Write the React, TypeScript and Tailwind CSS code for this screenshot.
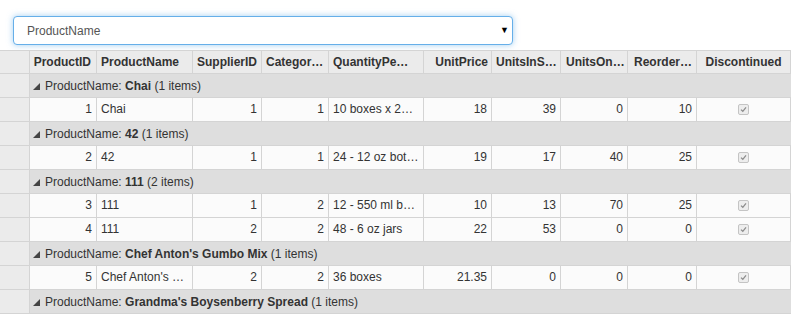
import React from "react";

type Col = { label: string; w: number; hAlign: string; num?: boolean; check?: boolean };

const cols: Col[] = [
  { label: "ProductID", w: 67, hAlign: "text-right pr-[5px]", num: true },
  { label: "ProductName", w: 96, hAlign: "text-left pl-[4px]" },
  { label: "SupplierID", w: 69, hAlign: "text-left pl-[4px]", num: true },
  { label: "CategoryID", w: 67, hAlign: "text-left pl-[4px]", num: true },
  { label: "QuantityPerUnit", w: 95, hAlign: "text-left pl-[4px] pr-[12px]" },
  { label: "UnitPrice", w: 68, hAlign: "text-right pr-[3px]", num: true },
  { label: "UnitsInStock", w: 69, hAlign: "text-left pl-[4px]", num: true },
  { label: "UnitsOnOrder", w: 67, hAlign: "text-left pl-[5px]", num: true },
  { label: "ReorderLevel", w: 69, hAlign: "text-left pl-[6px]", num: true },
  { label: "Discontinued", w: 94, hAlign: "text-center", check: true },
];

// each group: title + rows
const groups = [
  { name: "Chai", count: 1, rows: [["1", "Chai", "1", "1", "10 boxes x 20 bags", "18", "39", "0", "10"]] },
  { name: "42", count: 1, rows: [["2", "42", "1", "1", "24 - 12 oz bottles", "19", "17", "40", "25"]] },
  {
    name: "111",
    count: 2,
    rows: [
      ["3", "111", "1", "2", "12 - 550 ml bottles", "10", "13", "70", "25"],
      ["4", "111", "2", "2", "48 - 6 oz jars", "22", "53", "0", "0"],
    ],
  },
  { name: "Chef Anton's Gumbo Mix", count: 1, rows: [["5", "Chef Anton's Cajun Seasoning", "2", "2", "36 boxes", "21.35", "0", "0", "0"]] },
  { name: "Grandma's Boysenberry Spread", count: 1, rows: [] },
];

const CheckBox = () => (
  <span className="inline-flex w-[11px] h-[11px] items-center justify-center rounded-[2px] border border-[#c4c4c4] bg-[#ededed] align-middle">
    <svg width="7" height="7" viewBox="0 0 7 7">
      <path d="M1 3.6 L2.8 5.3 L6 1.4" fill="none" stroke="#8c8c8c" strokeWidth="1.3" />
    </svg>
  </span>
);

const RowHead = () => <div className="w-[30px] shrink-0 h-[24px] bg-[#ebebeb] border-r border-b border-[#d4d4d4]" />;

const App = () => {
  return (
    <div className="w-[791px] h-[314px] overflow-hidden bg-white text-[#333] text-[12px]" style={{ fontFamily: '"Liberation Sans", Arial, sans-serif' }}>
      {/* group by select */}
      <div className="pt-[16px] pl-[13px]">
        <div className="w-[500px] h-[29px] flex items-center justify-between rounded-[4px] border border-[#66afe9] bg-white pl-[13px] pr-[3px] shadow-[0_0_6px_rgba(102,175,233,0.6)]">
          <span className="text-[#555] text-[12px]">ProductName</span>
          <span className="text-[9px] text-black">▼</span>
        </div>
      </div>

      <div className="mt-[5px] w-[830px]">
        {/* header */}
        <div className="flex border-t border-[#d4d4d4] h-[24px]">
          <div className="w-[30px] shrink-0 h-[23px] bg-[#ebebeb] border-r border-b border-[#d4d4d4]" />
          {cols.map((c) => (
            <div
              key={c.label}
              style={{ width: c.w }}
              className={`shrink-0 h-[23px] leading-[22px] bg-[#ebebeb] border-r border-b border-[#d4d4d4] font-bold whitespace-nowrap overflow-hidden text-ellipsis ${c.hAlign}`}
            >
              {c.label}
            </div>
          ))}
        </div>

        {groups.map((g) => (
          <React.Fragment key={g.name}>
            <div className="flex">
              <RowHead />
              <div className="w-[800px] h-[24px] bg-[#dedede] border-b border-[#d4d4d4] flex items-center pl-[3px] gap-[5px]">
                <svg width="7" height="7" viewBox="0 0 7 7" className="mt-[1px]">
                  <path d="M7 0 L7 7 L0 7 Z" fill="#444" />
                </svg>
                <span>
                  ProductName: <b>{g.name}</b> ({g.count} items)
                </span>
              </div>
            </div>
            {g.rows.map((r, ri) => (
              <div key={ri} className="flex">
                <RowHead />
                {cols.map((c, i) => (
                  <div
                    key={c.label}
                    style={{ width: c.w }}
                    className={`shrink-0 h-[24px] leading-[23px] bg-[#fbfbfb] border-r border-b border-[#d4d4d4] whitespace-nowrap overflow-hidden text-ellipsis ${
                      c.check ? "text-center" : c.num ? "text-right pr-[4px]" : "text-left pl-[4px] pr-[4px]"
                    }`}
                  >
                    {c.check ? <CheckBox /> : r[i]}
                  </div>
                ))}
              </div>
            ))}
          </React.Fragment>
        ))}
      </div>
    </div>
  );
};

export default App;
